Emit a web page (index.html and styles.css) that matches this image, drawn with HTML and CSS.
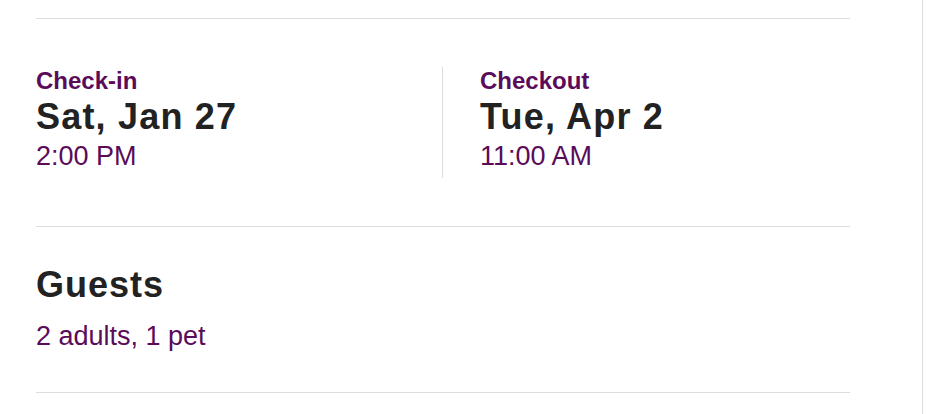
FILE: index.html
```html
<!DOCTYPE html>
<html lang="en">
<head>
<meta charset="utf-8">
<title>Trip details</title>
<link rel="stylesheet" href="styles.css">
</head>
<body>
<div class="page">
  <main class="main">
    <div class="rule"></div>
    <section class="dates">
      <div class="col">
        <div class="label">Check-in</div>
        <div class="date">Sat, Jan 27</div>
        <div class="time">2:00 PM</div>
      </div>
      <div class="col second">
        <div class="label">Checkout</div>
        <div class="date">Tue, Apr 2</div>
        <div class="time">11:00 AM</div>
      </div>
    </section>
    <div class="rule"></div>
    <section class="guests">
      <h2 class="heading">Guests</h2>
      <div class="guest-text">2 adults, 1 pet</div>
    </section>
    <div class="rule"></div>
  </main>
</div>
</body>
</html>
```

FILE: styles.css
```css
html, body {
  margin: 0;
  padding: 0;
  background: #fff;
}
body {
  font-family: "Liberation Sans", Arial, sans-serif;
}
.page {
  width: 947px;
  height: 414px;
  overflow: hidden;
}
.main {
  width: 814px;
  height: 396px;
  padding: 18px 72px 0 36px;
  border-right: 1px solid #dddddd;
}
.rule {
  height: 1px;
  background: #dddddd;
}
.dates {
  display: grid;
  grid-template-columns: 406px 1fr;
  padding: 48px 0;
}
.col {
  padding-bottom: 5px;
}
.col.second {
  border-left: 1px solid #dddddd;
  padding-left: 37px;
}
.label {
  font-size: 24px;
  line-height: 28px;
  font-weight: bold;
  color: #5a0b5a;
}
.date {
  font-size: 36px;
  line-height: 44px;
  font-weight: bold;
  letter-spacing: 1.2px;
  color: #222222;
}
.time {
  font-size: 27px;
  line-height: 34px;
  color: #5a0b5a;
}
.guests {
  padding: 36px 0 41px;
}
.heading {
  margin: 0;
  font-size: 36px;
  line-height: 44px;
  font-weight: bold;
  letter-spacing: 1px;
  color: #222222;
}
.guest-text {
  margin-top: 14px;
  font-size: 27px;
  line-height: 30px;
  color: #5a0b5a;
}
```
